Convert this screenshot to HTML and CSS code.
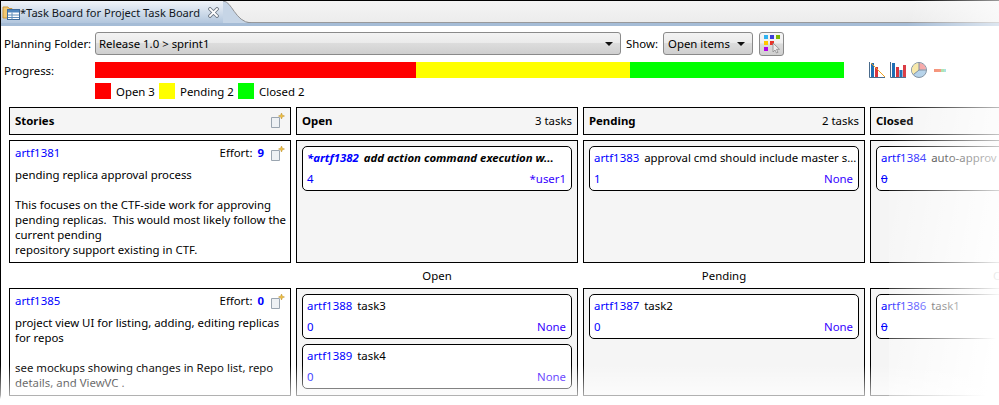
FILE: index.html
```html
<!DOCTYPE html>
<html lang="en">
<head>
    <meta charset="UTF-8">
    <meta name="viewport" content="width=device-width, initial-scale=1.0">
    <title>Task Board</title>
    <link rel="stylesheet" href="styles.css">
</head>
<body>
    <div class="window">
        <div class="tabstrip">
            <div class="tab">
                <svg class="tab-icon" width="18" height="16" viewBox="0 0 18 16">
                    <path d="M1 14V3h5l1 1.500h3V14z" fill="#f2c871" stroke="#c8963c"/>
                    <rect x="5.500" y="5.500" width="12" height="10" fill="#fff" stroke="#3f6c9c"/>
                    <rect x="6" y="6" width="11" height="2.500" fill="#4f86bd"/>
                    <path d="M6 11h11M6 13.500h11M10 8.500v7" stroke="#5f8db8"/>
                </svg>
                <span class="tab-title">*Task Board for Project Task Board</span>
                <svg class="tab-close" width="11" height="11" viewBox="0 0 11 11">
                    <path d="M2 2l7 7M9 2l-7 7" stroke="#6f7986" stroke-width="3.600" stroke-linecap="square"/>
                    <path d="M2 2l7 7M9 2l-7 7" stroke="#fff" stroke-width="1.800" stroke-linecap="square"/>
                </svg>
            </div>
            <svg class="tab-curve" width="28" height="22" viewBox="0 0 28 22">
                <path d="M0 0C9 0 12 21 28 22H0z" fill="#c6d5e6"/>
                <path d="M0 0C9 0 12 21 28 22" fill="none" stroke="#8d8f92"/>
            </svg>
        </div>
        <div class="tabband"></div>

        <div class="filters">
            <span class="label">Planning Folder:</span>
            <div class="combo combo-folder">Release 1.0 &gt; sprint1</div>
            <span class="show-label">Show:</span>
            <div class="combo combo-show">Open items</div>
            <button class="board-btn" type="button">
                <svg width="20" height="20" viewBox="0 0 20 20">
                    <rect x="1" y="1" width="4" height="4" fill="#2fb2f0"/>
                    <rect x="7" y="1" width="4" height="4" fill="#3c3fd8"/>
                    <rect x="13" y="1" width="4" height="4" fill="#7fb800"/>
                    <rect x="1" y="7" width="4" height="4" fill="#ffc800"/>
                    <rect x="7" y="7" width="4" height="4" fill="#e8342a"/>
                    <rect x="1" y="13" width="4" height="4" fill="#b400e6"/>
                    <path d="M10 9v9l2-2 1.500 3 1.500-.7-1.500-3h3z" fill="#eee" stroke="#8a8a8a" stroke-width=".8"/>
                </svg>
            </button>
        </div>

        <div class="progress-row">
            <span class="label">Progress:</span>
            <div class="progress">
                <div class="seg seg-open"></div>
                <div class="seg seg-pending"></div>
                <div class="seg seg-closed"></div>
            </div>
            <div class="charts">
                <svg width="16" height="16" viewBox="0 0 16 16">
                    <path d="M.5 0v15.500H16" fill="none" stroke="#4a6b8c"/>
                    <rect x="2" y="1" width="3" height="14" fill="#1f6fb5"/>
                    <rect x="6" y="5" width="3" height="10" fill="#d9363e"/>
                    <path d="M2 1l14 14" stroke="#f0a020"/>
                </svg>
                <svg width="16" height="16" viewBox="0 0 16 16">
                    <path d="M.5 0v15.500H16" fill="none" stroke="#4a6b8c"/>
                    <rect x="2" y="1" width="3" height="14" fill="#1f6fb5"/>
                    <rect x="6" y="5" width="3" height="10" fill="#d9363e"/>
                    <rect x="9.500" y="8" width="3" height="7" fill="#1f6fb5"/>
                    <rect x="13" y="3" width="3" height="12" fill="#d9363e"/>
                </svg>
                <svg width="16" height="16" viewBox="0 0 16 16">
                    <circle cx="8" cy="8" r="7.500" fill="#a9cbe6" stroke="#6d7f92"/>
                    <path d="M8 8V1a7 7 0 0 1 7 6.500z" fill="#f59a9a"/>
                    <path d="M8 8V1a7 7 0 0 0-5.500 11.500z" fill="#f7e6a0"/>
                    <path d="M8 8V.5M8 8h7.500M8 8l-5.500 4.500" stroke="#6d7f92"/>
                </svg>
                <svg class="chart-dash" width="12" height="4" viewBox="0 0 12 4">
                    <rect width="7" height="3" y="1" fill="#f2714f"/>
                    <rect x="7" width="3" height="3" y="1" fill="#8fd88f"/>
                    <rect x="10" width="2" height="3" y="1" fill="#7fd6d6"/>
                </svg>
            </div>
        </div>

        <div class="legend">
            <span class="swatch swatch-open"></span><span class="legend-open">Open 3</span>
            <span class="swatch swatch-pending"></span><span class="legend-pending">Pending 2</span>
            <span class="swatch swatch-closed"></span><span>Closed 2</span>
        </div>

        <div class="board">
            <div class="head">
                <b>Stories</b>
                <svg class="note" width="14" height="15" viewBox="0 0 14 15">
                    <path d="M.5 4.500h8v10h-8z" fill="#eef1f4" stroke="#9aa5b0"/>
                    <path d="M10.500 0l.8 2.200 2.200.8-2.200.8-.8 2.200-.8-2.200-2.200-.8 2.200-.8z" fill="#f0c040" stroke="#b98a20" stroke-width=".5"/>
                </svg>
            </div>
            <div class="head"><b>Open</b><span>3 tasks</span></div>
            <div class="head"><b>Pending</b><span>2 tasks</span></div>
            <div class="head"><b>Closed</b></div>

            <div class="story story-first">
                <div class="story-top">
                    <a class="link">artf1381</a>
                    <span class="effort">Effort:<b>9</b></span>
                    <svg class="note" width="14" height="15" viewBox="0 0 14 15">
                        <path d="M.5 4.500h8v10h-8z" fill="#eef1f4" stroke="#9aa5b0"/>
                        <path d="M10.500 0l.8 2.200 2.200.8-2.200.8-.8 2.200-.8-2.200-2.200-.8 2.200-.8z" fill="#f0c040" stroke="#b98a20" stroke-width=".5"/>
                    </svg>
                </div>
                <p class="story-text">pending replica approval process

This focuses on the CTF-side work for approving
pending replicas.  This would most likely follow the
current pending
repository support existing in CTF.</p>
            </div>
            <div class="cell cell-first">
                <div class="card card-dirty">
                    <div class="card-title"><a class="link">*artf1382</a><span>add action command execution w...</span></div>
                    <div class="card-meta"><a class="link">4</a><a class="owner">*user1</a></div>
                </div>
            </div>
            <div class="cell cell-first">
                <div class="card">
                    <div class="card-title"><a class="link">artf1383</a><span>approval cmd should include master s...</span></div>
                    <div class="card-meta"><a class="link">1</a><a class="owner">None</a></div>
                </div>
            </div>
            <div class="cell cell-first">
                <div class="card">
                    <div class="card-title"><a class="link">artf1384</a><span>auto-approv</span></div>
                    <div class="card-meta"><a class="link done">0</a></div>
                </div>
            </div>

            <div></div>
            <div class="col-label">Open</div>
            <div class="col-label">Pending</div>
            <div class="col-label">Closed</div>

            <div class="story story-second">
                <div class="story-top">
                    <a class="link">artf1385</a>
                    <span class="effort">Effort:<b>0</b></span>
                    <svg class="note" width="14" height="15" viewBox="0 0 14 15">
                        <path d="M.5 4.500h8v10h-8z" fill="#eef1f4" stroke="#9aa5b0"/>
                        <path d="M10.500 0l.8 2.200 2.200.8-2.200.8-.8 2.200-.8-2.200-2.200-.8 2.200-.8z" fill="#f0c040" stroke="#b98a20" stroke-width=".5"/>
                    </svg>
                </div>
                <p class="story-text">project view UI for listing, adding, editing replicas
for repos

see mockups showing changes in Repo list, repo
details, and ViewVC .</p>
            </div>
            <div class="cell">
                <div class="card">
                    <div class="card-title"><a class="link">artf1388</a><span>task3</span></div>
                    <div class="card-meta"><a class="link">0</a><a class="owner">None</a></div>
                </div>
                <div class="card">
                    <div class="card-title"><a class="link">artf1389</a><span>task4</span></div>
                    <div class="card-meta"><a class="link">0</a><a class="owner">None</a></div>
                </div>
            </div>
            <div class="cell">
                <div class="card">
                    <div class="card-title"><a class="link">artf1387</a><span>task2</span></div>
                    <div class="card-meta"><a class="link">0</a><a class="owner">None</a></div>
                </div>
            </div>
            <div class="cell">
                <div class="card">
                    <div class="card-title"><a class="link">artf1386</a><span>task1</span></div>
                    <div class="card-meta"><a class="link done">0</a></div>
                </div>
            </div>
        </div>
    </div>
    <div class="fade-right"></div>
    <div class="fade-bottom"></div>
</body>
</html>
```

FILE: styles.css
```css
* {
    box-sizing: border-box;
}

html, body {
    margin: 0;
    padding: 0;
    height: 405px;
    overflow: hidden;
    background-color: white;
}

body {
    position: relative;
    font-family: "Noto Sans", sans-serif;
    font-size: 11.4px;
    line-height: 15px;
    color: #000;
}

.window {
    width: 999px;
    height: 405px;
    overflow: hidden;
    border-top: 1px solid #000;
    border-left: 1px solid #000;
}

/* tab strip */
.tabstrip {
    display: flex;
    height: 22px;
    background: linear-gradient(#f4f4f4, #ececec);
    border-bottom: 1px solid #98999b;
}

.tab {
    display: flex;
    align-items: center;
    width: 222px;
    height: 22px;
    padding-left: 1px;
    background: linear-gradient(#f0f4f9, #b2c6dd);
    font-size: 11.1px;
}

.tab-icon {
    flex: none;
}

.tab-title {
    color: #10161c;
    white-space: nowrap;
}

.tab-close {
    margin-left: 8px;
    flex: none;
}

.tab-curve {
    flex: none;
}

.tabband {
    height: 3px;
    background-color: #a5bcd6;
}

/* filter rows */
.filters {
    display: flex;
    align-items: center;
    height: 23px;
    margin-top: 6px;
    padding-left: 3px;
}

.label {
    width: 91px;
    flex: none;
    white-space: nowrap;
}

.combo {
    position: relative;
    height: 23px;
    padding: 3px 0 0 3px;
    border: 1px solid #8a8a8a;
    border-radius: 3px;
    background: linear-gradient(#f3f3f3 0, #ebebeb 45%, #dcdcdc 50%, #cfcfcf 100%);
}

.combo::after {
    content: "";
    position: absolute;
    right: 7px;
    top: 9px;
    border-left: 4px solid transparent;
    border-right: 4px solid transparent;
    border-top: 4px solid #111;
}

.combo-folder {
    width: 526px;
}

.show-label {
    margin-left: 5px;
    width: 37px;
}

.combo-show {
    width: 90px;
    padding-left: 4px;
}

.board-btn {
    align-self: flex-start;
    width: 25px;
    height: 24px;
    margin-left: 6px;
    padding: 1px 0 0 2px;
    border: 1px solid #8a8a8a;
    border-radius: 3px;
    background: linear-gradient(#f6f6f6 0, #efefef 45%, #dcdcdc 50%, #cfcfcf 100%);
}

.progress-row {
    display: flex;
    align-items: center;
    height: 16px;
    margin-top: 7px;
    padding-left: 3px;
}

.progress {
    display: flex;
    width: 749px;
    height: 16px;
}

.seg-open {
    width: 321px;
    background-color: #f00;
}

.seg-pending {
    width: 214px;
    background-color: #ff0;
}

.seg-closed {
    width: 214px;
    background-color: #0f0;
}

.charts {
    display: flex;
    align-items: center;
    gap: 5px;
    margin-left: 25px;
}

.chart-dash {
    margin-left: 2px;
}

.legend {
    display: flex;
    align-items: center;
    height: 16px;
    margin-top: 5px;
    padding-left: 94px;
}

.swatch {
    width: 16px;
    height: 16px;
    margin-right: 5px;
}

.swatch-open {
    background-color: #f00;
}

.swatch-pending {
    background-color: #ff0;
}

.swatch-closed {
    background-color: #0f0;
}

.legend-open {
    width: 43px;
}

.legend-pending {
    width: 58px;
}

/* board */
.board {
    display: grid;
    grid-template-columns: repeat(4, 282px);
    grid-template-rows: 28px 128px 25px 108px;
    column-gap: 5px;
    margin-top: 8px;
    margin-left: 8px;
}

.head {
    display: flex;
    align-items: center;
    justify-content: space-between;
    padding: 0 5px 2px;
    border: 1px solid #000;
    background-color: #f5f5f5;
}

.head b {
    font-weight: 700;
}

.note {
    flex: none;
}

.story {
    padding: 4px 5px;
    border: 1px solid #000;
    background-color: #fff;
}

.story .note {
    margin-top: 2px;
}

.story-first,
.cell-first {
    margin-top: 5px;
}

.story-top {
    display: flex;
    align-items: center;
    height: 15px;
}

.effort {
    margin-left: auto;
}

.effort b {
    margin-left: 5px;
    margin-right: 7px;
    color: #00f;
    font-weight: 700;
}

.story-text {
    margin: 7px 0 0;
    white-space: pre;
}

.link {
    color: #00f;
}

.owner {
    color: #3600ff;
}

.done {
    text-decoration: line-through;
}

.cell {
    display: flex;
    flex-direction: column;
    gap: 5px;
    padding: 5px;
    border: 1px solid #000;
    background-color: #f5f5f5;
    overflow: hidden;
}

.card {
    flex: none;
    height: 45px;
    padding: 3px 5px 0 4px;
    border: 1px solid #000;
    border-radius: 5px;
    background-color: #fff;
}

.card-title {
    height: 15px;
    white-space: nowrap;
}

.card-title span {
    margin-left: 5px;
}

.card-dirty .card-title {
    font-weight: 700;
    font-style: italic;
}

.card-meta {
    display: flex;
    justify-content: space-between;
    margin-top: 6px;
}

.col-label {
    text-align: center;
    padding-top: 5px;
}

/* the screenshot is faded out towards its right and bottom edges */
.fade-right {
    position: absolute;
    top: 0;
    right: 0;
    width: 110px;
    height: 405px;
    background: linear-gradient(100deg, rgba(255, 255, 255, 0) 12%, #fff 92%);
}

.fade-bottom {
    position: absolute;
    left: 0;
    bottom: 0;
    width: 999px;
    height: 40px;
    background: linear-gradient(rgba(255, 255, 255, 0), rgba(255, 255, 255, 0.65) 75%, #fff 85%);
}
```
